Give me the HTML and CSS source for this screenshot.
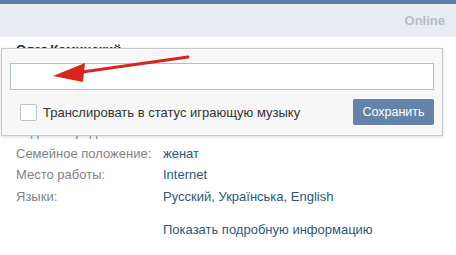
FILE: index.html
```html
<!DOCTYPE html>
<html lang="ru">
<head>
    <meta charset="UTF-8">
    <title>Профиль</title>
    <link rel="stylesheet" href="styles.css">
</head>
<body>
    <div class="topbar"></div>
    <div class="header">
        <span class="online">Online</span>
    </div>

    <div class="profile">
        <h2 class="name">Олег Коминский</h2>
        <div class="status">изменить статус</div>
        <div class="info">
            <div class="row"><span class="label">Родной город:</span><a class="value">Николаев</a></div>
            <div class="row"><span class="label">Семейное положение:</span><a class="value">женат</a></div>
            <div class="row"><span class="label">Место работы:</span><a class="value">Internet</a></div>
            <div class="row"><span class="label">Языки:</span><a class="value">Русский, Українська, English</a></div>
        </div>
        <a class="more">Показать подробную информацию</a>
    </div>

    <div class="status-popup">
        <input type="text" class="status-input">
        <div class="popup-bottom">
            <label class="check">
                <span class="box"></span>
                Транслировать в статус играющую музыку
            </label>
            <button class="save">Сохранить</button>
        </div>
    </div>

    <svg class="arrow" width="200" height="40" viewBox="0 0 200 40">
        <line x1="188" y1="5" x2="75" y2="21" stroke="#d7261e" stroke-width="3" stroke-linecap="round"/>
        <polygon points="53,24 85,11 83,30" fill="#d7261e"/>
    </svg>
</body>
</html>
```

FILE: styles.css
```css
body {
    margin: 0;
    font-family: "Liberation Sans", Arial, sans-serif;
    font-size: 13px;
    background: #fff;
    position: relative;
    overflow: hidden;
}

.topbar {
    height: 4px;
    background: #5b7fa6;
}

.header {
    height: 33px;
    background: #e9edf1;
    display: flex;
    align-items: center;
    justify-content: flex-end;
    padding-right: 11px;
}

.online {
    color: #b5bdc7;
    font-weight: bold;
    font-size: 13px;
}

.profile {
    padding: 5px 16px 0;
}

.name {
    margin: 0;
    font-size: 13px;
    font-weight: bold;
    color: #2b2b2b;
    line-height: 16px;
}

.status {
    color: #999;
    height: 63px;
}

.info {
    display: flex;
    flex-direction: column;
}

.row {
    display: flex;
    height: 21.5px;
    align-items: center;
}

.label {
    width: 147px;
    color: #828282;
}

.value {
    color: #2b587a;
}

.more {
    display: block;
    margin: 15px 0 0 147px;
    color: #2b587a;
}

.status-popup {
    position: absolute;
    left: 1px;
    top: 48px;
    width: 424px;
    padding: 14px 8px 10px;
    background: #f7f7f7;
    border: 1px solid #c5c9cf;
    box-shadow: 0 1px 3px rgba(0, 0, 0, 0.15);
}

.status-input {
    display: block;
    box-sizing: border-box;
    width: 100%;
    height: 27px;
    margin: 0;
    border: 1px solid #a9c0da;
    background: #fff;
    outline: none;
}

.popup-bottom {
    display: flex;
    justify-content: space-between;
    align-items: center;
    margin-top: 9px;
}

.check {
    display: flex;
    align-items: center;
    gap: 6px;
    color: #333;
    padding-left: 10px;
    font-size: 13px;
}

.box {
    width: 15px;
    height: 15px;
    border: 1px solid #c0c4c9;
    background: #fff;
    border-radius: 2px;
}

.save {
    width: 81px;
    height: 26px;
    background: #6383a8;
    color: #fff;
    border: none;
    border-radius: 2px;
    font-family: "Liberation Sans", Arial, sans-serif;
    font-size: 12.5px;
}

.arrow {
    position: absolute;
    left: 0;
    top: 52px;
}
```
